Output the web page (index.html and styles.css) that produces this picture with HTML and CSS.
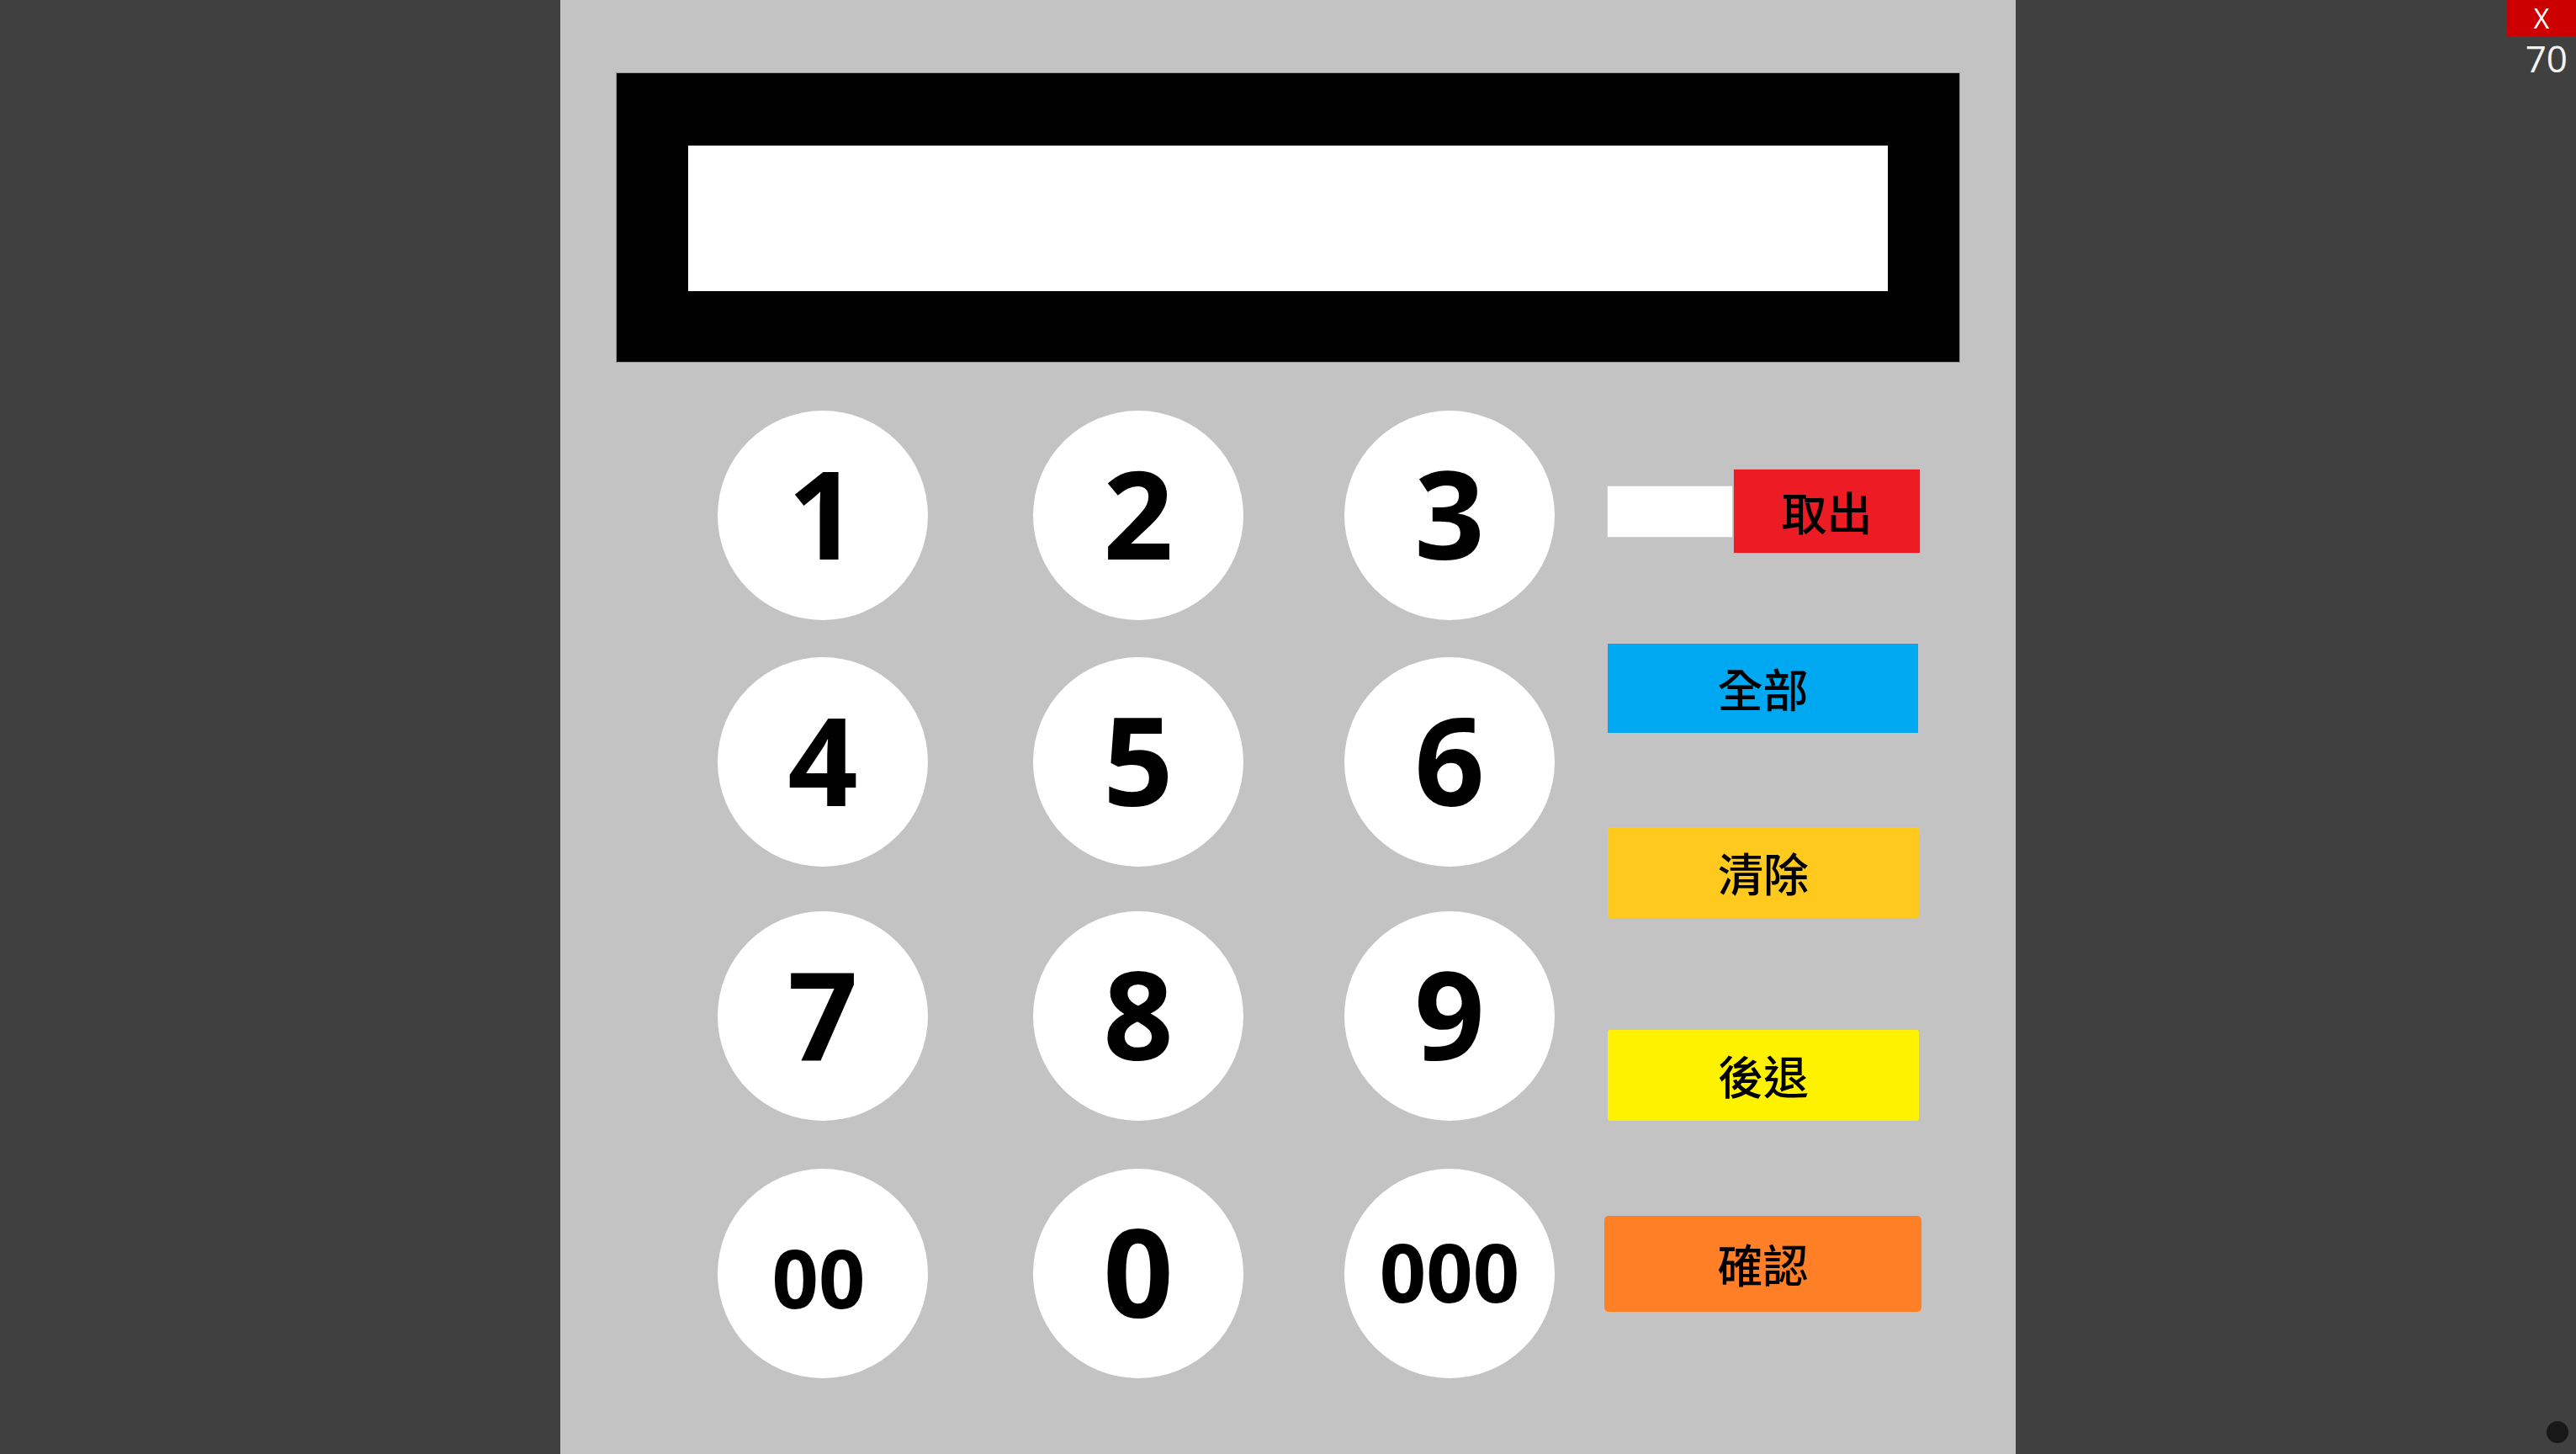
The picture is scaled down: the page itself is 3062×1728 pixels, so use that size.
FILE: index.html
```html
<!DOCTYPE html>
<html lang="zh-Hant">
<head>
<meta charset="utf-8">
<title>Calculator</title>
<link rel="stylesheet" href="styles.css">
</head>
<body>
<main class="panel">
  <div class="screen"><div class="screen-inner"></div></div>
  <div class="controls">
    <div class="keypad">
      <div class="key"><span class="digit">1</span></div>
      <div class="key"><span class="digit">2</span></div>
      <div class="key"><span class="digit">3</span></div>
      <div class="key"><span class="digit">4</span></div>
      <div class="key"><span class="digit">5</span></div>
      <div class="key"><span class="digit">6</span></div>
      <div class="key"><span class="digit">7</span></div>
      <div class="key"><span class="digit">8</span></div>
      <div class="key"><span class="digit">9</span></div>
      <div class="key"><span class="digit small dbl">00</span></div>
      <div class="key"><span class="digit">0</span></div>
      <div class="key"><span class="digit small">000</span></div>
    </div>
    <div class="actions">
      <div class="take-row">
        <div class="take-input"></div>
        <div class="btn btn-take">取出</div>
      </div>
      <div class="btn btn-all">全部</div>
      <div class="btn btn-clear">清除</div>
      <div class="btn btn-back">後退</div>
      <div class="btn btn-ok">確認</div>
    </div>
  </div>
</main>
<div class="close-box">X</div>
<div class="counter">70</div>
<div class="dot"></div>
</body>
</html>
```
FILE: styles.css
```css
html, body {
  margin: 0;
  padding: 0;
}
body {
  width: 3062px;
  height: 1728px;
  overflow: hidden;
  background: #404040;
  display: flex;
  justify-content: center;
  font-family: "Open Sans", "Noto Sans", sans-serif;
  position: relative;
}
.panel {
  width: 1730px;
  height: 1728px;
  box-sizing: border-box;
  background: #c3c3c3;
  padding: 86px 66px 0 66px;
  display: flex;
  flex-direction: column;
}
.screen {
  width: 1598px;
  height: 345px;
  box-sizing: border-box;
  background: #000;
  border: 1px solid #9a9a9a;
  padding: 86px 85px 84px 85px;
}
.screen-inner {
  width: 100%;
  height: 100%;
  background: #fff;
}
.controls {
  margin-top: 57px;
  display: flex;
  align-items: flex-start;
}
.keypad {
  margin-left: 121px;
  display: grid;
  grid-template-columns: 375px 370px 250px;
  grid-template-rows: 293px 302px 306px 250px;
}
.key {
  width: 250px;
  height: 249px;
  border-radius: 50%;
  background: #fff;
  display: flex;
  align-items: center;
  justify-content: center;
}
.digit {
  font-family: "Open Sans", "Noto Sans", sans-serif;
  font-weight: 700;
  font-size: 146px;
  line-height: 1;
  color: #000;
  padding-bottom: 8px;
}
.digit.small {
  font-size: 97px;
  padding-bottom: 6px;
}
.digit.dbl {
  padding-bottom: 0;
  padding-top: 8px;
  margin-right: 10px;
}
.actions {
  margin-left: 59px;
  width: 377px;
  display: flex;
  flex-direction: column;
  align-items: flex-start;
}
.take-row {
  margin-top: 69px;
  margin-left: 3px;
  display: flex;
  align-items: center;
}
.take-input {
  width: 150px;
  height: 62px;
  box-sizing: border-box;
  background: #fff;
  border: 1px solid #cfcfcf;
}
.btn {
  box-sizing: border-box;
  display: flex;
  align-items: center;
  justify-content: center;
  font-family: "Noto Sans CJK TC", "Noto Sans CJK SC", sans-serif;
  font-weight: 500;
  font-size: 54px;
  line-height: 1;
  color: #000;
}
.btn-take {
  width: 223px;
  height: 101px;
  background: #ed1c24;
  border: 1px solid #cdb0b0;
}
.btn-all {
  margin-top: 107px;
  margin-left: 4px;
  width: 369px;
  height: 106px;
  background: #00a8f2;
}
.btn-clear {
  margin-top: 112px;
  margin-left: 4px;
  width: 370px;
  height: 108px;
  background: #ffc91e;
  border-radius: 3px;
}
.btn-back {
  margin-top: 133px;
  margin-left: 4px;
  width: 370px;
  height: 108px;
  background: #fff200;
  border-radius: 3px;
}
.btn-ok {
  margin-top: 113px;
  width: 377px;
  height: 114px;
  background: #ff7f27;
  border-radius: 5px;
}
.close-box {
  position: absolute;
  top: 0;
  right: 0;
  width: 82px;
  height: 43px;
  background: #cc0000;
  color: #fff;
  font-family: "Open Sans", "Noto Sans", sans-serif;
  font-size: 32px;
  line-height: 43px;
  text-align: center;
}
.counter {
  position: absolute;
  top: 43px;
  right: 10px;
  color: #f2f2f2;
  font-family: "Open Sans", "Noto Sans", sans-serif;
  font-size: 44px;
  line-height: 52px;
}
.dot {
  position: absolute;
  right: 9px;
  bottom: 13px;
  width: 26px;
  height: 26px;
  border-radius: 50%;
  background: #181818;
}
```
